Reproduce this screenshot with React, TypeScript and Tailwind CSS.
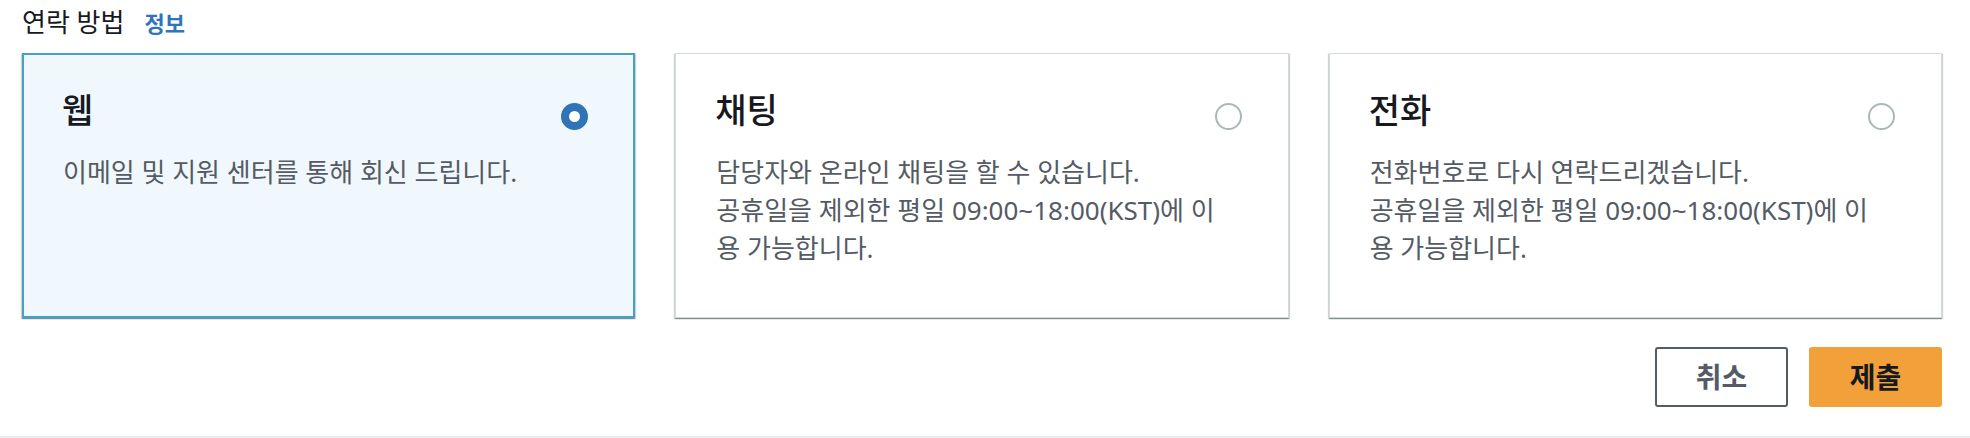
import React from "react";

type Option = {
  id: string;
  title: string;
  lines: string[];
};

const options: Option[] = [
  { id: "web", title: "웹", lines: ["이메일 및 지원 센터를 통해 회신 드립니다."] },
  {
    id: "chat",
    title: "채팅",
    lines: [
      "담당자와 온라인 채팅을 할 수 있습니다.",
      "공휴일을 제외한 평일 09:00~18:00(KST)에 이",
      "용 가능합니다.",
    ],
  },
  {
    id: "phone",
    title: "전화",
    lines: [
      "전화번호로 다시 연락드리겠습니다.",
      "공휴일을 제외한 평일 09:00~18:00(KST)에 이",
      "용 가능합니다.",
    ],
  },
];

const font = { fontFamily: "'Noto Sans', 'Noto Sans CJK KR', sans-serif" };

const Tile: React.FC<{ option: Option; selected: boolean }> = ({ option, selected }) => {
  return (
    <div
      className={
        selected
          ? "border-2 border-[#44a1c9] bg-[#f1f8fd] pl-[38px] pr-[45px] pt-[33px] pb-[49px] shadow-[0_1px_1px_0_rgba(0,28,36,0.3),1px_1px_1px_0_rgba(0,28,36,0.15),-1px_1px_1px_0_rgba(0,28,36,0.15)]"
          : "border border-[#d5dbdb] bg-white pl-[39px] pr-[46px] pt-[34px] pb-[50px] shadow-[0_1px_1px_0_rgba(0,28,36,0.3),1px_1px_1px_0_rgba(0,28,36,0.15),-1px_1px_1px_0_rgba(0,28,36,0.15)]"
      }
    >
      <div className="flex items-start justify-between h-[44px]">
        <span className="text-[34px] leading-[44px] font-medium text-[#16191f]">{option.title}</span>
        {selected ? (
          <span className="mt-[15px] w-[27px] h-[27px] rounded-full border-[8px] border-[#2f73b8] bg-white" />
        ) : (
          <span className="mt-[15px] w-[27px] h-[27px] rounded-full border-2 border-[#aab7b8] bg-white" />
        )}
      </div>
      <div className="mt-[21px] pl-px text-[26px] leading-[38px] text-[#545b64]">
        {option.lines.map((line, i) => (
          <div key={i} className="whitespace-nowrap">
            {line}
          </div>
        ))}
      </div>
    </div>
  );
};

export default function App() {
  return (
    <div className="w-[1970px] h-[438px] bg-white border-b-2 border-[#eaeded]" style={font}>
      <div className="pl-[22px] pr-[28px] pt-[4px]">
        <div className="flex items-baseline h-[36px] mb-[13px]">
          <span className="text-[26px] leading-[36px] text-[#16191f]">연락 방법</span>
          <span className="ml-[20px] text-[22px] leading-[36px] font-bold text-[#2f75bd]">정보</span>
        </div>
        <div className="grid grid-cols-3 gap-[40px]">
          {options.map((o) => (
            <Tile key={o.id} option={o} selected={o.id === "web"} />
          ))}
        </div>
        <div className="flex justify-end gap-[21px] mt-[29px]">
          <button className="w-[133px] h-[60px] rounded-[3px] border-2 border-[#545b64] bg-white text-[28px] font-bold text-[#545b64]">
            취소
          </button>
          <button className="w-[133px] h-[60px] rounded-[3px] bg-[#f1a03a] text-[28px] font-bold text-[#16191f]">
            제출
          </button>
        </div>
      </div>
    </div>
  );
}
